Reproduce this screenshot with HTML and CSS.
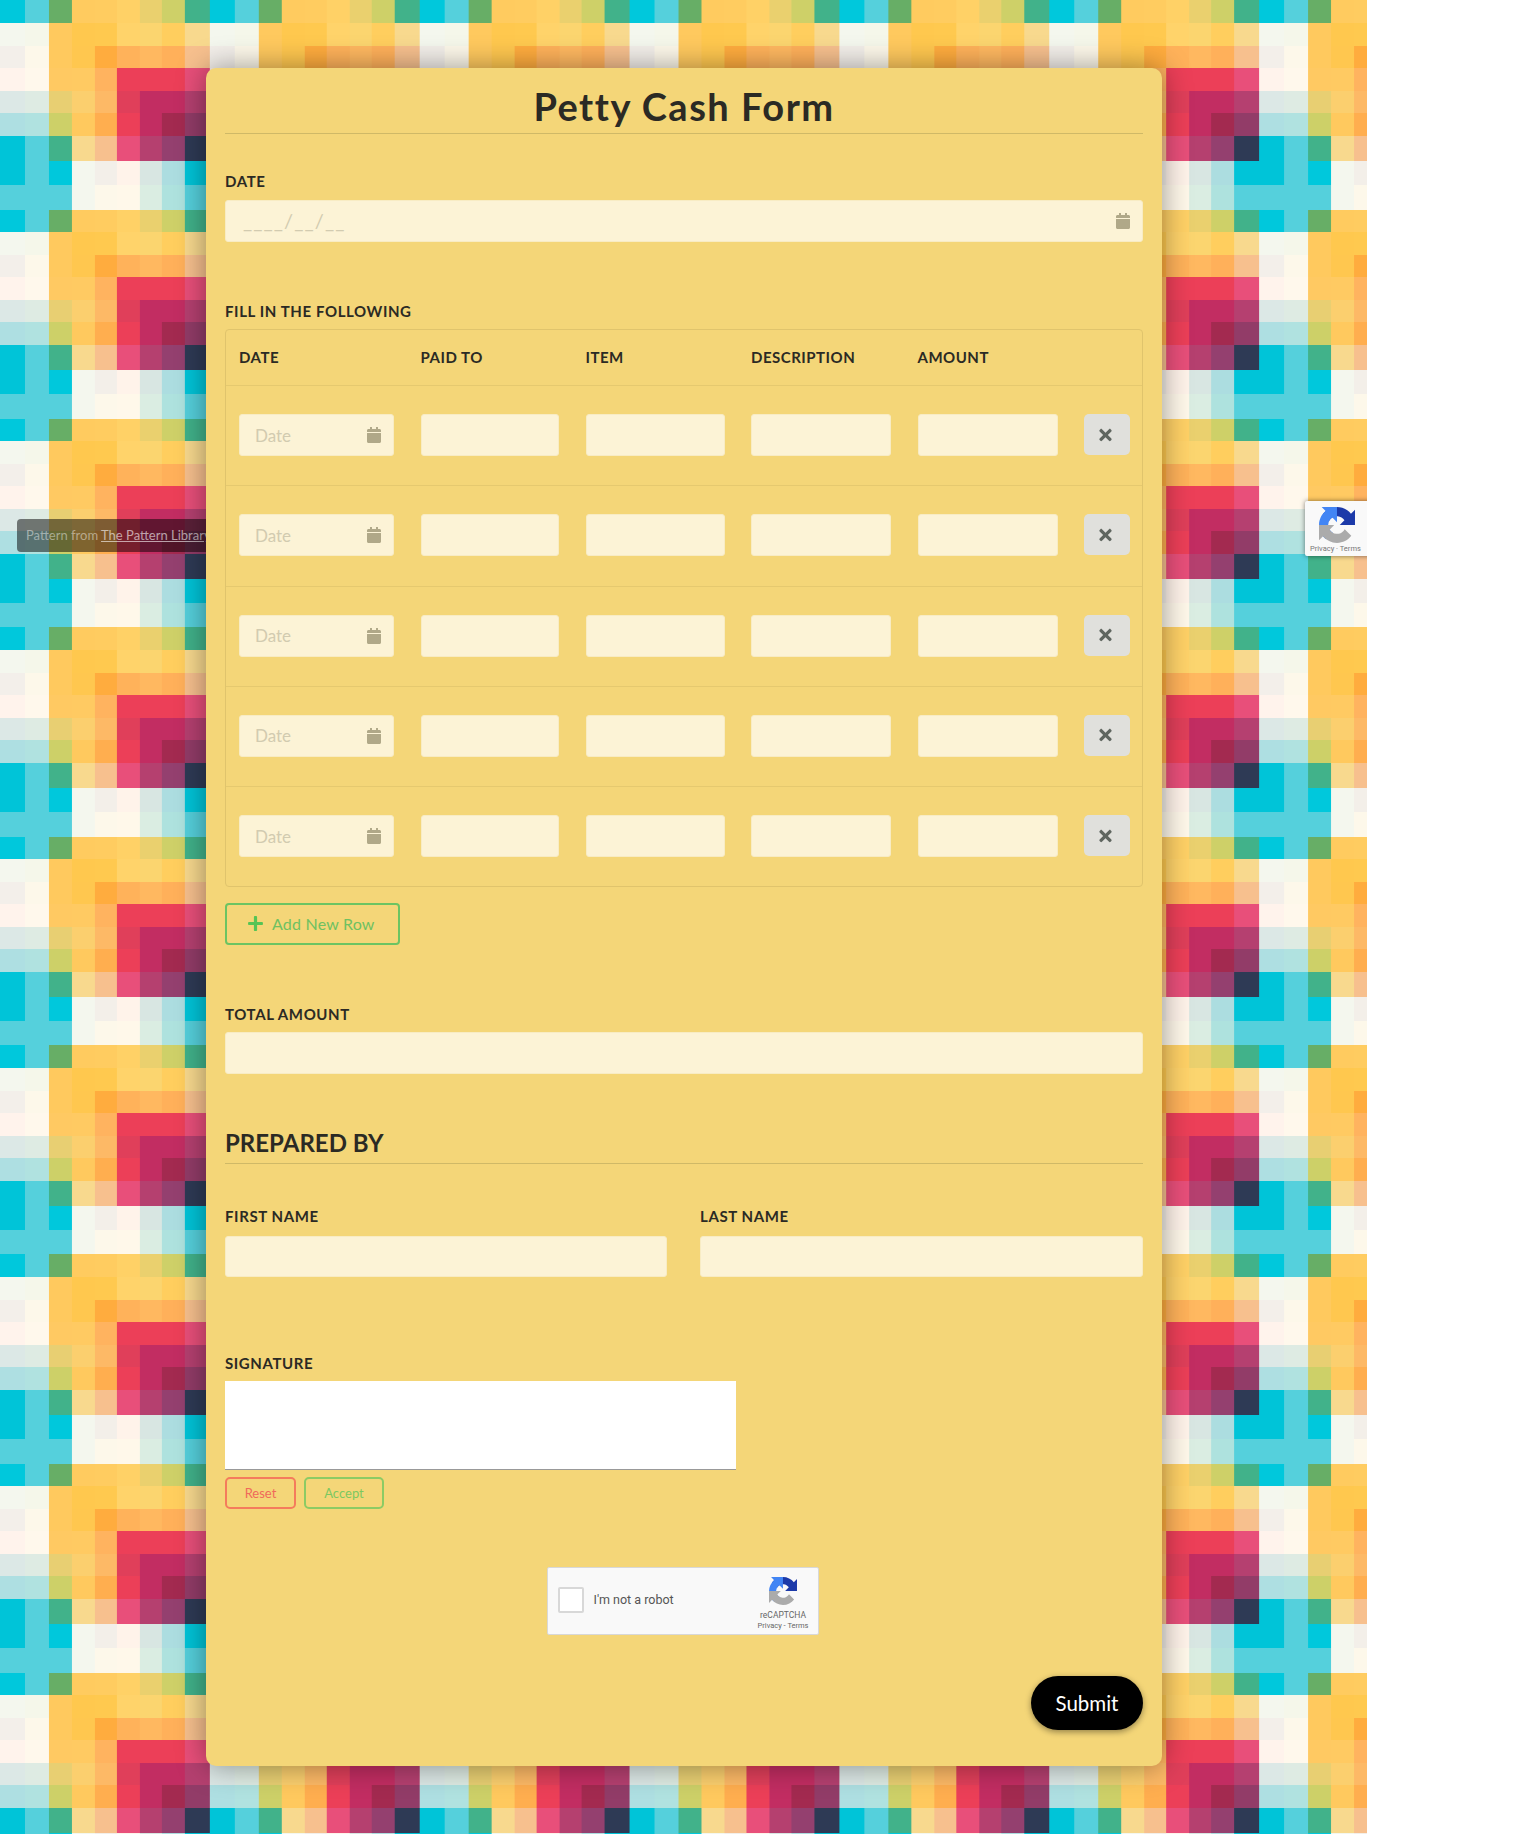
FILE: index.html
```html
<!DOCTYPE html>
<html lang="en">
<head>
    <meta charset="UTF-8">
    <meta name="viewport" content="width=device-width, initial-scale=1.0">
    <title>Petty Cash Form</title>
    <link rel="stylesheet" href="styles.css">
</head>
<body>
    <svg width="0" height="0" class="defs">
        <symbol id="i-cal" viewBox="0 0 448 512"><path d="M12 192h424c6.6 0 12 5.4 12 12v260c0 26.5-21.5 48-48 48H48c-26.5 0-48-21.5-48-48V204c0-6.6 5.4-12 12-12zm436-44v-36c0-26.5-21.5-48-48-48h-48V12c0-6.6-5.4-12-12-12h-40c-6.6 0-12 5.4-12 12v52H160V12c0-6.6-5.4-12-12-12h-40c-6.6 0-12 5.4-12 12v52H48C21.5 64 0 85.5 0 112v36c0 6.6 5.4 12 12 12h424c6.6 0 12-5.4 12-12z"/></symbol>
        <symbol id="i-x" viewBox="0 0 352 512"><path d="M242.72 256l100.07-100.07c12.28-12.28 12.28-32.19 0-44.48l-22.24-22.24c-12.28-12.28-32.19-12.28-44.48 0L176 189.28 75.93 89.21c-12.28-12.28-32.19-12.28-44.48 0L9.21 111.45c-12.28 12.28-12.28 32.19 0 44.48L109.28 256 9.21 356.07c-12.28 12.28-12.28 32.19 0 44.48l22.24 22.24c12.28 12.28 32.2 12.28 44.48 0L176 322.72l100.07 100.07c12.28 12.28 32.2 12.28 44.48 0l22.24-22.24c12.28-12.28 12.28-32.19 0-44.48L242.72 256z"/></symbol>
        <symbol id="i-plus" viewBox="0 0 448 512"><path d="M416 208H272V64c0-17.67-14.33-32-32-32h-32c-17.67 0-32 14.33-32 32v144H32c-17.67 0-32 14.33-32 32v32c0 17.67 14.33 32 32 32h144v144c0 17.67 14.33 32 32 32h32c17.67 0 32-14.33 32-32V304h144c17.67 0 32-14.33 32-32v-32c0-17.67-14.33-32-32-32z"/></symbol>
        <symbol id="i-recaptcha" viewBox="0 0 64 64">
            <path fill="#1c3aa9" d="M64 31.955l-.033-1.37V4.687l-7.16 7.16C50.948 4.674 42.033.089 32.05.089c-10.4 0-19.622 4.958-25.458 12.633l11.736 11.86a15.555 15.555 0 0 1 4.753-5.333c2.05-1.6 4.952-2.91 9.015-2.91.49 0 .87.057 1.15.165 5.036.397 9.4 3.177 11.97 7.21l-8.307 8.307c10.522-.04 22.41-.066 27.09.003"/>
            <path fill="#4285f4" d="M31.95.0l-1.37.033H4.687l7.16 7.16C4.674 13.052.089 21.967.089 31.95c0 10.4 4.958 19.622 12.633 25.458l11.86-11.736a15.555 15.555 0 0 1-5.333-4.753c-1.6-2.05-2.91-4.952-2.91-9.015 0-.49.057-.87.165-1.15.397-5.036 3.177-9.4 7.21-11.97l8.307 8.307c-.04-10.522-.066-22.41.003-27.09"/>
            <path fill="#ababab" d="M0 32l.033 1.37v25.898l7.16-7.16c5.858 7.173 14.774 11.758 24.757 11.758 10.4 0 19.622-4.958 25.458-12.633l-11.736-11.86a15.555 15.555 0 0 1-4.753 5.333c-2.05 1.6-4.952 2.91-9.015 2.91-.49 0-.87-.057-1.15-.165-5.036-.397-9.4-3.177-11.97-7.21l8.307-8.307c-10.522.04-22.41.066-27.09-.003"/>
        </symbol>
    </svg>

    <div class="page">
        <!-- background tile, 9 x 9 squares -->
        <svg class="tile-bg" width="1367" height="1834">
            <defs>
                <pattern id="tile" width="209.85" height="209" patternUnits="userSpaceOnUse">
                    <rect x="0" y="0" fill="#00c8dc"/><rect x="25" y="0" fill="#55d0dc"/><rect x="49" y="0" fill="#67ae66"/><rect x="72" y="0" fill="#ffcb5f"/><rect x="95" y="0" fill="#ffcc60"/><rect x="117" y="0" fill="#ffd166"/><rect x="140" y="0" fill="#ead06e"/><rect x="162" y="0" fill="#ced068"/><rect x="185" y="0" fill="#41b28a"/>
                    <rect x="0" y="23" fill="#f4f7ee"/><rect x="25" y="23" fill="#f5f7ea"/><rect x="49" y="23" fill="#ffc95e"/><rect x="72" y="23" fill="#ffc84e"/><rect x="95" y="23" fill="#ffc94f"/><rect x="117" y="23" fill="#ffd36a"/><rect x="140" y="23" fill="#fbd56f"/><rect x="162" y="23" fill="#ffce5e"/><rect x="185" y="23" fill="#f8d98e"/>
                    <rect x="0" y="46" fill="#f3efea"/><rect x="25" y="46" fill="#fdf8ea"/><rect x="49" y="46" fill="#ffc95e"/><rect x="72" y="46" fill="#ffc74f"/><rect x="95" y="46" fill="#ffac3e"/><rect x="117" y="46" fill="#ffb25a"/><rect x="140" y="46" fill="#ffb860"/><rect x="162" y="46" fill="#ffb05a"/><rect x="185" y="46" fill="#f7c08e"/>
                    <rect x="0" y="68" fill="#fff3ec"/><rect x="25" y="68" fill="#fff8ec"/><rect x="49" y="68" fill="#ffc962"/><rect x="72" y="68" fill="#ffca62"/><rect x="95" y="68" fill="#ffb35f"/><rect x="117" y="68" fill="#ec3f58"/><rect x="140" y="68" fill="#ec3f58"/><rect x="162" y="68" fill="#ec3f58"/><rect x="185" y="68" fill="#e84f7a"/>
                    <rect x="0" y="91" fill="#dce8e6"/><rect x="25" y="91" fill="#deebe3"/><rect x="49" y="91" fill="#e8cf72"/><rect x="72" y="91" fill="#fbcf6e"/><rect x="95" y="91" fill="#fdb966"/><rect x="117" y="91" fill="#e03f5a"/><rect x="140" y="91" fill="#c22d62"/><rect x="162" y="91" fill="#c22d62"/><rect x="185" y="91" fill="#b54070"/>
                    <rect x="0" y="113" fill="#aedfe2"/><rect x="25" y="113" fill="#b0e2e0"/><rect x="49" y="113" fill="#cdd068"/><rect x="72" y="113" fill="#ffc95e"/><rect x="95" y="113" fill="#ffae4f"/><rect x="117" y="113" fill="#ec3f58"/><rect x="140" y="113" fill="#c22d62"/><rect x="162" y="113" fill="#a32a50"/><rect x="185" y="113" fill="#923c68"/>
                    <rect x="0" y="136" fill="#00c4d8"/><rect x="25" y="136" fill="#55d0dc"/><rect x="49" y="136" fill="#41b28a"/><rect x="72" y="136" fill="#f8d98e"/><rect x="95" y="136" fill="#f7c08e"/><rect x="117" y="136" fill="#e84f7a"/><rect x="140" y="136" fill="#b5406f"/><rect x="162" y="136" fill="#94406f"/><rect x="185" y="136" fill="#2e3a55"/>
                    <rect x="0" y="161" fill="#00c4d8"/><rect x="25" y="161" fill="#55d0dc"/><rect x="49" y="161" fill="#00c8dc"/><rect x="72" y="161" fill="#f4f7ee"/><rect x="95" y="161" fill="#f3efe9"/><rect x="117" y="161" fill="#fff3ea"/><rect x="140" y="161" fill="#d8e6e2"/><rect x="162" y="161" fill="#acdde0"/><rect x="185" y="161" fill="#00c4d8"/>
                    <rect x="0" y="185" fill="#55d0dc"/><rect x="25" y="185" fill="#55d0dc"/><rect x="49" y="185" fill="#55d0dc"/><rect x="72" y="185" fill="#f4f7ee"/><rect x="95" y="185" fill="#fdf8ea"/><rect x="117" y="185" fill="#fff8ea"/><rect x="140" y="185" fill="#daede2"/><rect x="162" y="185" fill="#aee2de"/><rect x="185" y="185" fill="#55d0dc"/>
                </pattern>
            </defs>
            <rect class="tile-fill" width="1367" height="1834" fill="url(#tile)"/>
        </svg>

        <div class="credit">Pattern from <a href="#">The Pattern Library</a></div>

        <div class="badge">
            <svg class="badge-logo"><use href="#i-recaptcha"/></svg>
            <span class="badge-text">Privacy · Terms</span>
        </div>

        <form class="card">
            <h1 class="title">Petty Cash Form</h1>

            <div class="group">
                <label class="label">DATE</label>
                <div class="date-field">
                    <input type="text" class="input input-mask" placeholder="____/__/__">
                    <svg class="cal"><use href="#i-cal"/></svg>
                </div>
            </div>

            <div class="group group-table">
                <label class="label">FILL IN THE FOLLOWING</label>
                <div class="table">
                    <div class="row row-head">
                        <span>DATE</span><span>PAID TO</span><span>ITEM</span><span>DESCRIPTION</span><span>AMOUNT</span>
                    </div>
                    <div class="row">
                        <div class="date-field"><input type="text" class="input input-date" placeholder="Date"><svg class="cal"><use href="#i-cal"/></svg></div>
                        <input type="text" class="input"><input type="text" class="input"><input type="text" class="input"><input type="text" class="input">
                        <button type="button" class="del"><svg><use href="#i-x"/></svg></button>
                    </div>
                    <div class="row">
                        <div class="date-field"><input type="text" class="input input-date" placeholder="Date"><svg class="cal"><use href="#i-cal"/></svg></div>
                        <input type="text" class="input"><input type="text" class="input"><input type="text" class="input"><input type="text" class="input">
                        <button type="button" class="del"><svg><use href="#i-x"/></svg></button>
                    </div>
                    <div class="row">
                        <div class="date-field"><input type="text" class="input input-date" placeholder="Date"><svg class="cal"><use href="#i-cal"/></svg></div>
                        <input type="text" class="input"><input type="text" class="input"><input type="text" class="input"><input type="text" class="input">
                        <button type="button" class="del"><svg><use href="#i-x"/></svg></button>
                    </div>
                    <div class="row">
                        <div class="date-field"><input type="text" class="input input-date" placeholder="Date"><svg class="cal"><use href="#i-cal"/></svg></div>
                        <input type="text" class="input"><input type="text" class="input"><input type="text" class="input"><input type="text" class="input">
                        <button type="button" class="del"><svg><use href="#i-x"/></svg></button>
                    </div>
                    <div class="row row-last">
                        <div class="date-field"><input type="text" class="input input-date" placeholder="Date"><svg class="cal"><use href="#i-cal"/></svg></div>
                        <input type="text" class="input"><input type="text" class="input"><input type="text" class="input"><input type="text" class="input">
                        <button type="button" class="del"><svg><use href="#i-x"/></svg></button>
                    </div>
                </div>
                <button type="button" class="add-row"><svg><use href="#i-plus"/></svg>Add New Row</button>
            </div>

            <div class="group group-total">
                <label class="label">TOTAL AMOUNT</label>
                <input type="text" class="input">
            </div>

            <h2 class="section">PREPARED BY</h2>

            <div class="name-grid">
                <div>
                    <label class="label">FIRST NAME</label>
                    <input type="text" class="input input-name">
                </div>
                <div>
                    <label class="label">LAST NAME</label>
                    <input type="text" class="input input-name">
                </div>
            </div>

            <div class="group group-sign">
                <label class="label label-sign">SIGNATURE</label>
                <div class="sign-pad"></div>
                <div class="sign-actions">
                    <button type="button" class="btn-small btn-reset">Reset</button>
                    <button type="button" class="btn-small btn-accept">Accept</button>
                </div>
            </div>

            <div class="captcha-wrap">
                <div class="captcha">
                    <span class="captcha-box"></span>
                    <span class="captcha-text">I'm not a robot</span>
                    <div class="captcha-logo">
                        <svg><use href="#i-recaptcha"/></svg>
                        <span class="captcha-brand">reCAPTCHA</span>
                        <span class="captcha-links">Privacy - Terms</span>
                    </div>
                </div>
            </div>

            <div class="submit-wrap">
                <button type="submit" class="submit">Submit</button>
            </div>
        </form>
    </div>
</body>
</html>
```

FILE: styles.css
```css
* {
    margin: 0;
    padding: 0;
    box-sizing: border-box;
    font-family: "Lato", "Noto Sans", sans-serif;
}

body {
    background: white;
    color: #2b2a24;
}

.defs {
    position: absolute;
}

.page {
    position: relative;
    width: 1367px;
    height: 1834px;
    padding: 68px 0 0 206px;
    overflow: hidden;
}

.tile-bg {
    position: absolute;
    top: 0;
    left: 0;
    shape-rendering: crispEdges;
}

.tile-bg pattern rect {
    width: 26px;
    height: 26px;
}

.credit {
    position: absolute;
    top: 519px;
    left: 17px;
    width: 210px;
    height: 33px;
    padding-left: 9px;
    background: rgba(0, 0, 0, 0.5);
    border-radius: 4px;
    color: rgba(255, 255, 255, 0.45);
    font-size: 13px;
    line-height: 33px;
    white-space: nowrap;
}

.credit a {
    color: rgba(255, 255, 255, 0.6);
}

.badge {
    position: absolute;
    top: 501px;
    left: 1305px;
    width: 70px;
    height: 55px;
    background: #f9f9f9;
    box-shadow: 0 0 5px rgba(0, 0, 0, 0.5);
    border-radius: 2px;
    text-align: left;
}

.badge-logo {
    position: absolute;
    top: 6px;
    left: 14px;
    width: 36px;
    height: 36px;
}

.badge-text {
    position: absolute;
    top: 43px;
    left: 5px;
    font-family: "Roboto", sans-serif;
    font-size: 7.5px;
    line-height: 10px;
    color: #777;
    white-space: nowrap;
}

.card {
    position: relative;
    width: 956px;
    height: 1698px;
    padding: 0 19px 36px;
    background: #f4d678;
    border-radius: 10px;
    box-shadow: 0 0 30px rgba(0, 0, 0, 0.4);
}

.title {
    padding-top: 12px;
    font-size: 38px;
    line-height: 53px;
    font-weight: 700;
    text-align: center;
    letter-spacing: 1.5px;
    border-bottom: 1px solid #cfb967;
}

.group {
    margin-top: 37px;
}

.group-table {
    margin-top: 59px;
}

.group-total {
    margin-top: 59px;
}

.group-sign {
    margin-top: 76px;
}

.label {
    display: block;
    margin-bottom: 9px;
    font-size: 15px;
    line-height: 20px;
    font-weight: 700;
    letter-spacing: 0.6px;
}

.group-table .label,
.group-total .label,
.label-sign {
    margin-bottom: 8px;
}

.input {
    display: block;
    width: 100%;
    height: 42px;
    padding: 0 16px;
    background: #fcf3d6;
    border: 1px solid #f8ecc4;
    border-radius: 3px;
    font-size: 17px;
    color: #555;
}

.input::placeholder {
    color: #d2cbb0;
    opacity: 1;
}

.input-mask {
    padding: 0 17px 3px;
    font-size: 20px;
    letter-spacing: 1.1px;
}

.input-date {
    padding: 0 15px;
}

.input-name {
    height: 41px;
}

.date-field {
    position: relative;
}

.cal {
    position: absolute;
    top: 13px;
    right: 13px;
    width: 14px;
    height: 16px;
    fill: #b0a888;
}

.table {
    border: 1px solid #e0c46c;
    border-radius: 4px;
}

.row {
    display: grid;
    grid-template-columns: 155px 138.5px 139px 140px 140px 45.5px;
    column-gap: 26.5px;
    padding: 28px 13px 29.25px 13px;
    border-bottom: 1px solid #e5c96f;
}

.row-head {
    height: 56px;
    padding: 0 13px 2px;
    align-items: center;
    font-size: 15px;
    font-weight: 700;
    letter-spacing: 0.5px;
}

.row-last {
    border-bottom: none;
}

.del {
    height: 41px;
    padding-right: 3px;
    border: none;
    border-radius: 5px;
    background: #e0e0dc;
    cursor: pointer;
}

.del svg {
    display: block;
    width: 13px;
    height: 18px;
    margin: 0 auto;
    fill: #5f6660;
}

.add-row {
    display: flex;
    align-items: center;
    width: 175px;
    height: 42px;
    margin-top: 16px;
    padding: 0 0 2px 21px;
    background: transparent;
    border: 2px solid #6cc462;
    border-radius: 4px;
    color: #6fc161;
    font-size: 16px;
    letter-spacing: 0.2px;
    cursor: pointer;
}

.add-row svg {
    width: 15px;
    height: 17px;
    margin-right: 9px;
    fill: #55c455;
}

.section {
    margin-top: 54px;
    padding-bottom: 5px;
    font-size: 24px;
    line-height: 30px;
    font-weight: 700;
    border-bottom: 1px solid #cfb967;
}

.name-grid {
    display: grid;
    grid-template-columns: 442px 443px;
    column-gap: 33px;
    margin-top: 42px;
}

.name-grid .label {
    margin-bottom: 10px;
}

.sign-pad {
    width: 511px;
    height: 89px;
    background: white;
    border-bottom: 1px solid #999;
}

.sign-actions {
    display: flex;
    gap: 8px;
    margin-top: 7px;
}

.btn-small {
    height: 32px;
    background: transparent;
    border-radius: 5px;
    font-size: 13px;
    cursor: pointer;
}

.btn-reset {
    width: 71px;
    border: 2px solid #f47c5c;
    color: #f0695a;
}

.btn-accept {
    width: 80px;
    border: 2px solid #8ccb64;
    color: #7cc860;
}

.captcha-wrap {
    display: flex;
    justify-content: center;
    margin-top: 58px;
    padding-right: 3px;
}

.captcha {
    position: relative;
    display: flex;
    align-items: center;
    width: 272px;
    height: 68px;
    padding: 0 0 3px 10px;
    background: #f9f9f9;
    border: 1px solid #d8d8d8;
    border-radius: 2px;
}

.captcha-box {
    width: 26px;
    height: 26px;
    background: white;
    border: 2px solid #d8d8d8;
    border-radius: 2px;
}

.captcha-text {
    margin-left: 10px;
    font-family: "Roboto", sans-serif;
    font-size: 12.5px;
    color: #555;
}

.captcha-logo {
    position: absolute;
    top: 9px;
    right: 9px;
    display: flex;
    flex-direction: column;
    align-items: center;
    font-family: "Roboto", sans-serif;
    color: #666;
}

.captcha-logo svg {
    width: 28px;
    height: 28px;
    margin-bottom: 5px;
}

.captcha-brand {
    font-family: "Roboto", sans-serif;
    font-size: 8.5px;
    line-height: 11px;
}

.captcha-links {
    font-family: "Roboto", sans-serif;
    font-size: 7.5px;
    line-height: 10px;
}

.submit-wrap {
    display: flex;
    justify-content: flex-end;
    margin-top: 41px;
}

.submit {
    width: 112px;
    height: 54px;
    background: black;
    border: none;
    border-radius: 27px;
    color: white;
    font-size: 20.5px;
    box-shadow: 0 2px 6px rgba(0, 0, 0, 0.4);
    cursor: pointer;
}
```
